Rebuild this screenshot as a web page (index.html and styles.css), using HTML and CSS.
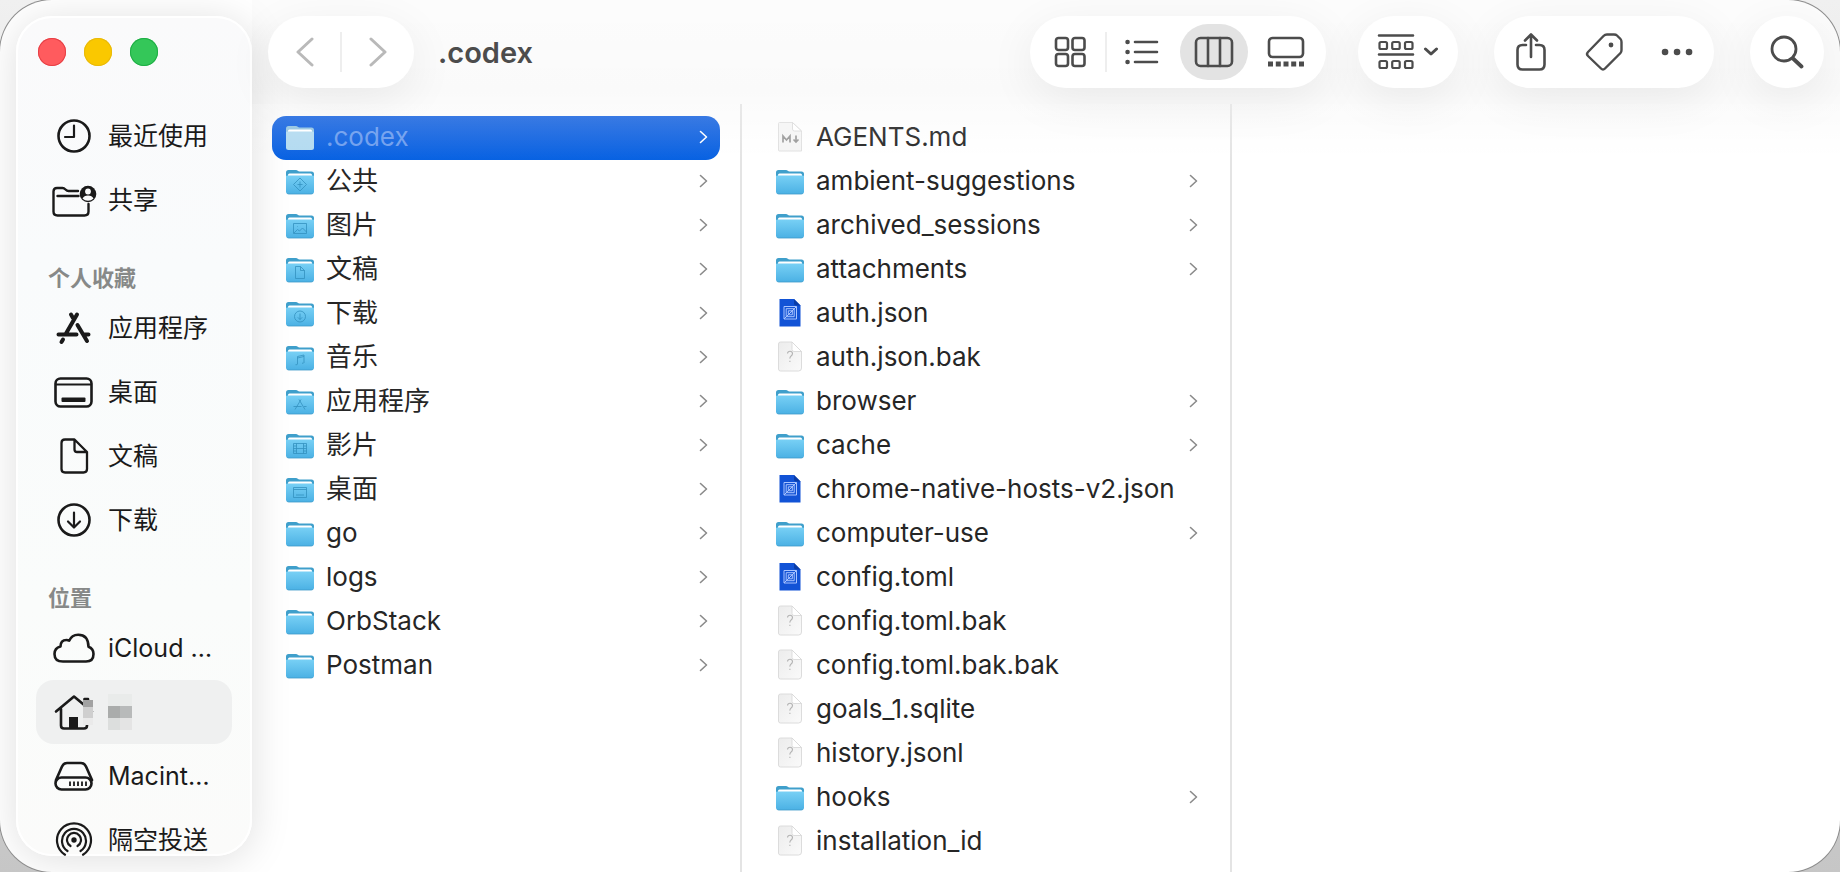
FILE: index.html
```html
<!DOCTYPE html>
<html lang="zh-CN">
<head>
<meta charset="utf-8">
<title>.codex</title>
<link rel="stylesheet" href="styles.css">
</head>
<body>
<svg class="sprite" aria-hidden="true">
  <defs>
    <linearGradient id="g-front" x1="0" y1="0" x2="0" y2="1"><stop offset="0" stop-color="#78d0f5"/><stop offset="1" stop-color="#4bb1e4"/></linearGradient>
    <linearGradient id="g-paper" x1="0" y1="0" x2="1" y2="1"><stop offset="0" stop-color="#ececec"/><stop offset="1" stop-color="#fafafa"/></linearGradient>
    <symbol id="folder" viewBox="0 0 28 32">
      <path d="M0 7.500a2.500 2.500 0 0 1 2.500-2.500h7.500c1.500 0 2 1.500 3.500 1.500h12a2.500 2.500 0 0 1 2.500 2.500v14H0z" fill="#3f9fcb"/>
      <rect x="2" y="8.500" width="24" height="6" rx="1.500" fill="#fff"/>
      <path d="M0 11q0-.500 1.500-.500h25q1.500 0 1.500.500v15.500a2.500 2.500 0 0 1-2.500 2.500h-23a2.500 2.500 0 0 1-2.500-2.500z" fill="url(#g-front)"/>
      <path d="M1 28.200q.7.800 1.700.800h22.600q1 0 1.700-.800" fill="none" stroke="#3d9bc9" stroke-width=".8"/>
    </symbol>
    <symbol id="folder-selected" viewBox="0 0 28 32">
      <path d="M0 7.500a2.500 2.500 0 0 1 2.500-2.500h7.500c1.500 0 2 1.500 3.500 1.500h12a2.500 2.500 0 0 1 2.500 2.500v14H0z" fill="#92c3e0"/>
      <rect x="2" y="8.500" width="24" height="6" rx="1.500" fill="#fff"/>
      <path d="M0 11q0-.500 1.500-.500h25q1.500 0 1.500.500v15.500a2.500 2.500 0 0 1-2.500 2.500h-23a2.500 2.500 0 0 1-2.500-2.500z" fill="#b2daf0"/>
    </symbol>
    <symbol id="file-blank" viewBox="0 0 28 32">
      <path d="M4.500 1h11.500l9.500 9.500v16.500a3 3 0 0 1-3 3h-18a2 2 0 0 1-2-2v-25a2 2 0 0 1 2-2z" fill="url(#g-paper)" stroke="#dcdcdc"/>
      <path d="M16 1v7.500a2 2 0 0 0 2 2h7.500z" fill="#fff" stroke="#d6d6d6" stroke-width=".8"/>
      <path d="M11.500 12.500q.2-2.200 2.500-2.200t2.500 2.200q0 1.500-1.400 2.500t-1.200 2.600M13.900 19.800v1.200" fill="none" stroke="#b4b4b4" stroke-width="1.100"/>
    </symbol>
    <symbol id="file-md" viewBox="0 0 28 32">
      <path d="M3.500 1.500h13l9 8.500v20h-22a1 1 0 0 1-1-1v-26.500a1 1 0 0 1 1-1z" fill="#f5f5f5" stroke="#e0e0e0"/>
      <path d="M16.500 1.500v6.500a2 2 0 0 0 2 2h7z" fill="#fff" stroke="#d6d6d6" stroke-width=".8"/>
      <path d="M7 21.500v-6.500l3.500 4 3.500-4v6.500M20 14.500v6M17.500 18.500l2.500 2.500 2.500-2.500" fill="none" stroke="#9b9b9b" stroke-width="1.700"/>
    </symbol>
    <symbol id="file-code" viewBox="0 0 28 32">
      <path d="M3.500 2h14.500l6.500 6.500v21h-21z" fill="#1253d6"/>
      <path d="M18 2l6.500 6.500h-4.500a2 2 0 0 1-2-2z" fill="#0a3da8"/>
      <path d="M8 9.500h12.500v12.500h-12.500zM10.200 11.700h8v8h-8zM12.300 13.800h4v4h-4zM8 22l12.500-12.500" fill="none" stroke="#a9c4ff" stroke-width="1"/>
    </symbol>
    <symbol id="chevron" viewBox="0 0 10 14"><path d="M2.500 1.500l6 5.500-6 5.500" fill="none" stroke="currentColor" stroke-width="1.600" stroke-linecap="round" stroke-linejoin="round"/></symbol>
  </defs>
</svg>

<div class="window">
  <aside class="sidebar">
    <div class="lights">
      <button class="light close" aria-label="关闭"></button>
      <button class="light minimize" aria-label="最小化"></button>
      <button class="light expand" aria-label="全屏"></button>
    </div>
    <nav class="places">
      <a class="place" href="#"><svg class="place-icon" viewBox="0 0 52 40"><circle cx="26" cy="20" r="15.500"/><path d="M26 9.500v11.500h-9" stroke-width="2.200"/></svg><span>最近使用</span></a>
      <a class="place" href="#"><svg class="place-icon" viewBox="0 0 52 40"><path d="M30 11h-9.500c-3 0-3-3-6-3h-5.500q-3.500 0-3.500 3.500v20q0 4 4 4h27q4 0 4-4v-7.500M9.500 16h21" stroke-width="2.400"/><circle cx="40" cy="14" r="8.300" class="solid"/><circle cx="40" cy="11.500" r="2.900" class="hole"/><path class="hole" d="M34.500 18.500q1.500-3 5.500-3t5.500 3q-2.200 2.200-5.500 2.200t-5.500-2.200z"/></svg><span>共享</span></a>

      <h2 class="section">个人收藏</h2>
      <a class="place" href="#"><svg class="place-icon" viewBox="0 0 52 40"><path d="M23 6.500l2 3.500M29 6.500L18 25.500M10.500 26.500h18M36 26.500h4.500M29.500 17l9.500 16M15 31.500l-1.500 2.500" stroke-width="4"/></svg><span>应用程序</span></a>
      <a class="place" href="#"><svg class="place-icon" viewBox="0 0 52 40"><rect x="7.500" y="6.500" width="36" height="28" rx="5"/><path d="M8 12.500h35" stroke-width="1.800"/><rect x="13.500" y="25.500" width="24" height="4.500" rx="1" class="solid"/></svg><span>桌面</span></a>
      <a class="place" href="#"><svg class="place-icon" viewBox="0 0 52 40"><path d="M17 3.500h9.500l12.500 12.500v17q0 3.500-3.500 3.500h-18.500q-3.500 0-3.500-3.500v-26q0-3.500 3.500-3.500zM26.500 4v9.500q0 2.500 2.500 2.500h9.500" stroke-width="2.300"/></svg><span>文稿</span></a>
      <a class="place" href="#"><svg class="place-icon" viewBox="0 0 52 40"><circle cx="26" cy="20" r="15.500"/><path d="M26 12.500v14.500M20 21.500l6 6 6-6" stroke-width="2.200"/></svg><span>下载</span></a>

      <h2 class="section">位置</h2>
      <a class="place" href="#"><svg class="place-icon" viewBox="0 0 52 40"><path d="M15 33.500q-8.500 0-8.500-7.500 0-6 6-7.500 0-6.500 6-6.500 1.500 0 2.700.7 2.500-6 9-6 10 0 10.300 12 5 1.800 5 7.300 0 7.500-7.500 7.500z"/></svg><span>iCloud …</span></a>
      <a class="place current" href="#" aria-label="个人"><svg class="place-icon" viewBox="0 0 52 40"><path d="M8 19.500l18-15 18 15M13 17v16.500q0 3 3 3h20q3 0 3-3v-18M36.500 12v-5h3.500v7"/><path d="M21 36v-11h9v11z" class="solid"/><path d="M35 14h10v12h-10z" fill="#cfcfcf" stroke="none"/><path d="M35 8h10v7h-10z" fill="#a2a2a2" stroke="none"/><path d="M35 26h10v7h-10z" fill="#eaeaea" stroke="none"/></svg><svg class="mosaic" viewBox="0 0 24 36"><path fill="#e9ebea" d="M0 0h24v12h-24z"/><path fill="#aaacab" d="M0 12h12v12h-12z"/><path fill="#b8baba" d="M12 12h12v12h-12z"/><path fill="#dcdedd" d="M0 24h12v12h-12z"/><path fill="#e4e4e4" d="M12 24h12v12h-12z"/></svg></a>
      <a class="place" href="#"><svg class="place-icon" viewBox="0 0 52 40"><path d="M8 24l6-13.500q1.500-3.500 5-3.500h14q3.500 0 5 3.500l6 13.500"/><rect x="7.500" y="21.500" width="36" height="12" rx="6"/><path d="M22 25.500v4.500M26 25.500v4.500M30 25.500v4.500M34 25.500v4.500M38 25.500v4.500" stroke-width="1.800" stroke-linecap="butt"/></svg><span>Macint…</span></a>
      <a class="place" href="#"><svg class="place-icon" viewBox="0 0 52 40"><circle cx="26" cy="20" r="2.700" class="solid"/><path d="M22.500 26a7 7 0 1 1 7 0M19.500 31a12 12 0 1 1 13 0M17 34.700a17 17 0 1 1 18 0" stroke-width="2.200"/></svg><span>隔空投送</span></a>
    </nav>
  </aside>

  <main class="main">
    <header class="toolbar">
      <div class="pill nav">
        <button class="tool" aria-label="后退"><svg width="18" height="30" viewBox="0 0 18 30"><path d="M16 2L2 15l14 13" stroke-width="3"/></svg></button>
        <button class="tool divided" aria-label="前进"><svg width="18" height="30" viewBox="0 0 18 30"><path d="M2 2l14 13L2 28" stroke-width="3"/></svg></button>
      </div>
      <h1 class="title">.codex</h1>
      <div class="tools">
        <div class="views">
          <div class="pill view">
            <button class="tool" aria-label="图标"><svg width="32" height="32" viewBox="0 0 32 32"><rect x="2" y="2" width="12" height="12" rx="2.500"/><rect x="18.500" y="2" width="12" height="12" rx="2.500"/><rect x="2" y="18" width="12" height="12" rx="2.500"/><rect x="18.500" y="18" width="12" height="12" rx="2.500"/></svg></button>
            <button class="tool divided" aria-label="列表"><svg width="34" height="28" viewBox="0 0 34 28"><path d="M10 4h22M10 14h22M10 24h22"/><path d="M2.500 4h.1M2.500 14h.1M2.500 24h.1" stroke-width="4.500"/></svg></button>
            <button class="tool" aria-label="分栏" aria-pressed="true"><svg width="40" height="32" viewBox="0 0 40 32"><rect x="2" y="2" width="36" height="28" rx="4.500"/><path d="M14 2v28M26 2v28"/></svg></button>
            <button class="tool" aria-label="画廊"><svg width="38" height="32" viewBox="0 0 38 32"><rect x="2" y="2" width="34" height="19" rx="3.500"/><path d="M1 25.500h5v5h-5zM8.800 25.500h5v5h-5zM16.500 25.500h5v5h-5zM24.200 25.500h5v5h-5zM32 25.500h5v5h-5z" class="ink"/></svg></button>
          </div>
          <div class="pill group">
            <button class="tool" aria-label="分组"><svg width="38" height="36" viewBox="0 0 38 36"><path d="M2 1.500h34M2 20.500h34"/><path d="M4 8h4.500q1.500 0 1.500 1.500v4q0 1.500-1.500 1.500h-4.500q-1.500 0-1.500-1.500v-4q0-1.500 1.500-1.500zM16.700 8h4.500q1.500 0 1.500 1.500v4q0 1.500-1.500 1.500h-4.500q-1.500 0-1.500-1.500v-4q0-1.500 1.500-1.500zM29.500 8h4.500q1.500 0 1.500 1.500v4q0 1.500-1.500 1.500h-4.500q-1.500 0-1.500-1.500v-4q0-1.500 1.500-1.500zM4 27h4.500q1.500 0 1.500 1.500v4q0 1.500-1.500 1.500h-4.500q-1.500 0-1.500-1.500v-4q0-1.500 1.500-1.500zM16.700 27h4.500q1.500 0 1.500 1.500v4q0 1.500-1.500 1.500h-4.500q-1.500 0-1.500-1.500v-4q0-1.500 1.500-1.500zM29.500 27h4.500q1.500 0 1.500 1.500v4q0 1.500-1.500 1.500h-4.500q-1.500 0-1.500-1.500v-4q0-1.500 1.500-1.500z" stroke-width="2.200"/></svg><svg width="16" height="10" viewBox="0 0 16 10"><path d="M2.500 2l5.500 5 5.500-5" stroke-width="3"/></svg></button>
          </div>
        </div>
        <div class="pill share">
          <button class="tool" aria-label="共享"><svg width="32" height="40" viewBox="0 0 32 40"><path d="M11 13h-3.500q-5 0-5 5v14.500q0 5 5 5h17q5 0 5-5v-14.500q0-5-5-5h-3.500M16 25v-22M10 8.500l6-6 6 6"/></svg></button>
          <button class="tool" aria-label="标签"><svg width="40" height="40" viewBox="0 0 40 40"><path d="M23 2.500h7q2 0 3 1l3.500 3.500q1 1 1 3v8q0 2-1 3l-15.500 15.500q-2 2-4 0l-13-12.500q-2-2 0-4l15.500-16q1.500-1.500 3.500-1.500z" stroke-width="2.400"/><circle cx="27" cy="13" r="2.400" class="ink"/></svg></button>
          <button class="tool" aria-label="更多"><svg width="32" height="8" viewBox="0 0 32 8"><path d="M4 4h.1M16 4h.1M28 4h.1" stroke-width="6.500"/></svg></button>
        </div>
        <div class="pill search">
          <button class="tool" aria-label="搜索"><svg width="34" height="34" viewBox="0 0 34 34"><circle cx="14" cy="14" r="12" stroke-width="2.800"/><path d="M23 23.500l8.500 8" stroke-width="3.800"/></svg></button>
        </div>
      </div>
    </header>

    <div class="browser">
      <ul class="column">
        <li><a class="row selected" href="#"><svg class="icon"><use href="#folder-selected"/></svg><span class="name">.codex</span><svg class="arrow"><use href="#chevron"/></svg></a></li>
        <li><a class="row" href="#"><svg class="icon"><use href="#folder"/><path class="emblem" d="M14 13l6.500 6.500-6.500 6.500-6.500-6.500zM14 16.500v6M11.500 19.500h5"/></svg><span class="name">公共</span><svg class="arrow"><use href="#chevron"/></svg></a></li>
        <li><a class="row" href="#"><svg class="icon"><use href="#folder"/><path class="emblem" d="M7.500 14.500h13v10h-13zM8 24l3.500-3.500 2 1.500 3-3 4 4M11 17.500h.500"/></svg><span class="name">图片</span><svg class="arrow"><use href="#chevron"/></svg></a></li>
        <li><a class="row" href="#"><svg class="icon"><use href="#folder"/><path class="emblem" d="M9.500 13.500h5l4 4v8h-9zM14.500 13.500v4h4"/></svg><span class="name">文稿</span><svg class="arrow"><use href="#chevron"/></svg></a></li>
        <li><a class="row" href="#"><svg class="icon"><use href="#folder"/><circle class="emblem" cx="14" cy="19.500" r="5.500"/><path class="emblem" d="M14 16.500v6M11.800 20.300l2.200 2.200 2.200-2.200"/></svg><span class="name">下载</span><svg class="arrow"><use href="#chevron"/></svg></a></li>
        <li><a class="row" href="#"><svg class="icon"><use href="#folder"/><path class="emblem" d="M11.500 23.500v-8l6.500-1.500v8M11.500 17l6.500-1.500"/><path class="emblem" d="M9.500 23.700h1.500M16 22.200h1.500" stroke-width="2.500"/></svg><span class="name">音乐</span><svg class="arrow"><use href="#chevron"/></svg></a></li>
        <li><a class="row" href="#"><svg class="icon"><use href="#folder"/><path class="emblem" d="M13 14.500l6 10M15 14.500l-6 10M7.500 21.500h8M18 21.500h2.500"/></svg><span class="name">应用程序</span><svg class="arrow"><use href="#chevron"/></svg></a></li>
        <li><a class="row" href="#"><svg class="icon"><use href="#folder"/><path class="emblem" d="M7.500 14.500h13v10h-13zM10.500 14.500v10M17.500 14.500v10M10.500 19.500h7M7.500 17h3M7.500 19.500h3M7.500 22h3M17.500 17h3M17.500 19.500h3M17.500 22h3"/></svg><span class="name">影片</span><svg class="arrow"><use href="#chevron"/></svg></a></li>
        <li><a class="row" href="#"><svg class="icon"><use href="#folder"/><path class="emblem" d="M7.500 14.500h13v10h-13zM7.500 16.500h13M10 22h8"/></svg><span class="name">桌面</span><svg class="arrow"><use href="#chevron"/></svg></a></li>
        <li><a class="row" href="#"><svg class="icon"><use href="#folder"/></svg><span class="name">go</span><svg class="arrow"><use href="#chevron"/></svg></a></li>
        <li><a class="row" href="#"><svg class="icon"><use href="#folder"/></svg><span class="name">logs</span><svg class="arrow"><use href="#chevron"/></svg></a></li>
        <li><a class="row" href="#"><svg class="icon"><use href="#folder"/></svg><span class="name">OrbStack</span><svg class="arrow"><use href="#chevron"/></svg></a></li>
        <li><a class="row" href="#"><svg class="icon"><use href="#folder"/></svg><span class="name">Postman</span><svg class="arrow"><use href="#chevron"/></svg></a></li>
      </ul>
      <ul class="column">
        <li><a class="row" href="#"><svg class="icon"><use href="#file-md"/></svg><span class="name">AGENTS.md</span></a></li>
        <li><a class="row" href="#"><svg class="icon"><use href="#folder"/></svg><span class="name">ambient-suggestions</span><svg class="arrow"><use href="#chevron"/></svg></a></li>
        <li><a class="row" href="#"><svg class="icon"><use href="#folder"/></svg><span class="name">archived_sessions</span><svg class="arrow"><use href="#chevron"/></svg></a></li>
        <li><a class="row" href="#"><svg class="icon"><use href="#folder"/></svg><span class="name">attachments</span><svg class="arrow"><use href="#chevron"/></svg></a></li>
        <li><a class="row" href="#"><svg class="icon"><use href="#file-code"/></svg><span class="name">auth.json</span></a></li>
        <li><a class="row" href="#"><svg class="icon"><use href="#file-blank"/></svg><span class="name">auth.json.bak</span></a></li>
        <li><a class="row" href="#"><svg class="icon"><use href="#folder"/></svg><span class="name">browser</span><svg class="arrow"><use href="#chevron"/></svg></a></li>
        <li><a class="row" href="#"><svg class="icon"><use href="#folder"/></svg><span class="name">cache</span><svg class="arrow"><use href="#chevron"/></svg></a></li>
        <li><a class="row" href="#"><svg class="icon"><use href="#file-code"/></svg><span class="name">chrome-native-hosts-v2.json</span></a></li>
        <li><a class="row" href="#"><svg class="icon"><use href="#folder"/></svg><span class="name">computer-use</span><svg class="arrow"><use href="#chevron"/></svg></a></li>
        <li><a class="row" href="#"><svg class="icon"><use href="#file-code"/></svg><span class="name">config.toml</span></a></li>
        <li><a class="row" href="#"><svg class="icon"><use href="#file-blank"/></svg><span class="name">config.toml.bak</span></a></li>
        <li><a class="row" href="#"><svg class="icon"><use href="#file-blank"/></svg><span class="name">config.toml.bak.bak</span></a></li>
        <li><a class="row" href="#"><svg class="icon"><use href="#file-blank"/></svg><span class="name">goals_1.sqlite</span></a></li>
        <li><a class="row" href="#"><svg class="icon"><use href="#file-blank"/></svg><span class="name">history.jsonl</span></a></li>
        <li><a class="row" href="#"><svg class="icon"><use href="#folder"/></svg><span class="name">hooks</span><svg class="arrow"><use href="#chevron"/></svg></a></li>
        <li><a class="row" href="#"><svg class="icon"><use href="#file-blank"/></svg><span class="name">installation_id</span></a></li>
      </ul>
    </div>
  </main>
</div>
</body>
</html>
```

FILE: styles.css
```css
* { box-sizing: border-box; }

body {
  margin: 0;
  background: linear-gradient(#f0f0f0, #c6c6c6);
  font-family: Inter, "Noto Sans CJK SC", sans-serif;
  font-size: 25px;
  color: #262626;
}

a { color: inherit; text-decoration: none; }
button { border: 0; padding: 0; background: none; font: inherit; color: inherit; }
h1, h2, ul { margin: 0; padding: 0; }
ul { list-style: none; }

.sprite { position: absolute; width: 0; height: 0; }

.window {
  display: flex;
  height: 100vh;
  overflow: hidden;
  background: #fff;
  border-radius: 52px;
  box-shadow: 0 0 0 1px #8c8c8c;
}

/* Sidebar */
.sidebar {
  flex: none;
  width: 236px;
  margin: 16px 0 16px 16px;
  padding: 0 20px;
  overflow: hidden;
  border-radius: 36px;
  background: linear-gradient(#fafafb, #f9fbfc 30%, #fafcfb 70%, #fbfbfa);
  box-shadow: inset 0 0 0 2px #fff, 0 4px 40px rgba(0, 0, 0, .13);
}

.lights { display: flex; gap: 18px; padding: 22px 2px 38px; }
.light { width: 28px; height: 28px; border-radius: 50%; }
.close { background: #ff5b5e; box-shadow: inset 0 0 0 1px #e64046; }
.minimize { background: #fac800; box-shadow: inset 0 0 0 1px #e8b90a; }
.expand { background: #34c759; box-shadow: inset 0 0 0 1px #1fae45; }

.section {
  height: 64px;
  padding: 27px 12px 0;
  font-size: 22px;
  font-weight: 600;
  line-height: 38px;
  color: #878988;
}

.place {
  display: flex;
  align-items: center;
  gap: 8px;
  height: 64px;
  padding-left: 12px;
  border-radius: 18px;
  color: #1a1a1a;
  line-height: 32px;
  white-space: nowrap;
}
.place.current { background: #eff0f0; }
.place-icon {
  flex: none;
  width: 52px;
  height: 40px;
  fill: none;
  stroke: currentColor;
  stroke-width: 2.600;
  stroke-linecap: round;
  stroke-linejoin: round;
}
.solid { fill: currentColor; stroke: none; }
.hole { fill: #fafbfc; stroke: none; }
.mosaic { width: 24px; height: 36px; }

/* Toolbar */
.main {
  display: flex;
  flex: 1;
  flex-direction: column;
  min-width: 0;
  background: linear-gradient(rgba(0, 0, 0, .012), rgba(0, 0, 0, .02) 90px, rgba(0, 0, 0, 0) 160px);
}

.toolbar {
  display: flex;
  align-items: center;
  height: 104px;
  padding: 0 16px;
  color: #4c4c4c;
}
.pill {
  display: flex;
  height: 72px;
  border-radius: 36px;
  background: #fff;
  box-shadow: 0 12px 48px rgba(0, 0, 0, .07);
}
.nav { width: 146px; color: #b9b9b9; }
.view { width: 296px; padding: 0 4px; }
.group { width: 100px; }
.share { width: 220px; }
.search { width: 74px; }

.title { margin-left: 24px; font-size: 29px; font-weight: 600; }
.tools { display: flex; gap: 36px; margin-left: auto; }
.views { display: flex; gap: 32px; }

.tool {
  position: relative;
  display: flex;
  flex: 1;
  align-items: center;
  justify-content: center;
  gap: 8px;
}
.tool svg {
  position: relative;
  fill: none;
  stroke: currentColor;
  stroke-width: 2.600;
  stroke-linecap: round;
  stroke-linejoin: round;
}
.tool .ink { fill: currentColor; stroke: none; }
.tool[aria-pressed="true"]::before {
  content: "";
  position: absolute;
  inset: 8px 2px;
  border-radius: 28px;
  background: #e3e3e3;
}
.tool.divided::after {
  content: "";
  position: absolute;
  top: 16px;
  bottom: 16px;
  left: -1px;
  width: 2px;
  background: #eee;
}

/* Columns */
.browser { position: relative; display: flex; flex: 1; min-height: 0; }
.browser::before {
  content: "";
  position: absolute;
  inset: 0 0 auto;
  height: 60px;
  background: linear-gradient(rgba(255, 255, 255, .16), rgba(255, 255, 255, 0));
  pointer-events: none;
}
.column {
  flex: none;
  width: 490px;
  padding: 12px 20px 0;
  overflow: hidden;
  border-right: 2px solid #e4e4e4;
  font-size: 26px;
}
.row {
  display: flex;
  align-items: center;
  gap: 12px;
  height: 44px;
  padding: 0 12px 2px 14px;
  border-radius: 14px;
}
.selected { background: linear-gradient(#1c66df, #0560e2); }
.icon { flex: none; width: 28px; height: 32px; }
.name { flex: 1; line-height: 32px; white-space: nowrap; }
.selected .name { color: #6c9dee; }
.arrow { flex: none; width: 10px; height: 14px; color: #8a8a8a; }
.selected .arrow { color: #fff; }
.emblem { fill: none; stroke: #3391bf; stroke-width: 1; opacity: .8; }
```
